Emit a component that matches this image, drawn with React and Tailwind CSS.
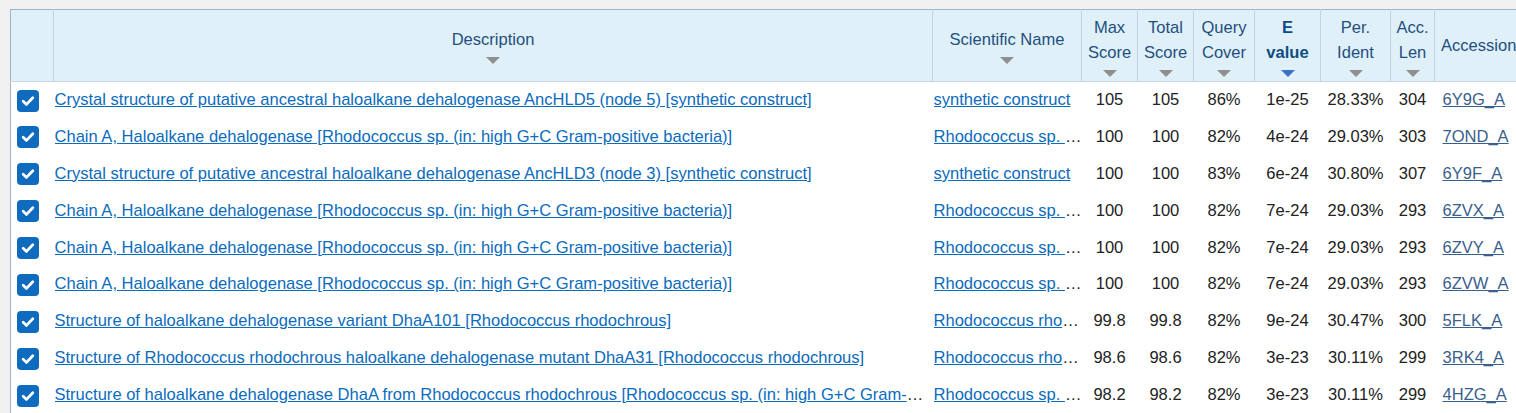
import React from "react";

const chainA = "Chain A, Haloalkane dehalogenase [Rhodococcus sp. (in: high G+C Gram-positive bacteria)]";
const rhodoSp = "Rhodococcus sp. (in: high G+C Gram-positive bacteria)";
const rhodoRh = "Rhodococcus rhodochrous";

const rows = [
  ["Crystal structure of putative ancestral haloalkane dehalogenase AncHLD5 (node 5) [synthetic construct]", "synthetic construct", "105", "105", "86%", "1e-25", "28.33%", "304", "6Y9G_A"],
  [chainA, rhodoSp, "100", "100", "82%", "4e-24", "29.03%", "303", "7OND_A"],
  ["Crystal structure of putative ancestral haloalkane dehalogenase AncHLD3 (node 3) [synthetic construct]", "synthetic construct", "100", "100", "83%", "6e-24", "30.80%", "307", "6Y9F_A"],
  [chainA, rhodoSp, "100", "100", "82%", "7e-24", "29.03%", "293", "6ZVX_A"],
  [chainA, rhodoSp, "100", "100", "82%", "7e-24", "29.03%", "293", "6ZVY_A"],
  [chainA, rhodoSp, "100", "100", "82%", "7e-24", "29.03%", "293", "6ZVW_A"],
  ["Structure of haloalkane dehalogenase variant DhaA101 [Rhodococcus rhodochrous]", rhodoRh, "99.8", "99.8", "82%", "9e-24", "30.47%", "300", "5FLK_A"],
  ["Structure of Rhodococcus rhodochrous haloalkane dehalogenase mutant DhaA31 [Rhodococcus rhodochrous]", rhodoRh, "98.6", "98.6", "82%", "3e-23", "30.11%", "299", "3RK4_A"],
  ["Structure of haloalkane dehalogenase DhaA from Rhodococcus rhodochrous [Rhodococcus sp. (in: high G+C Gram-positive bacteria)]", rhodoSp, "98.2", "98.2", "82%", "3e-23", "30.11%", "299", "4HZG_A"],
];

function Arrow({ active }) {
  return (
    <div
      className={
        "mt-[5px] mb-[2px] w-0 h-0 border-l-[7px] border-r-[7px] border-t-[7px] border-l-transparent border-r-transparent " +
        (active ? "border-t-[#3c71c8]" : "border-t-[#8f8f8f]")
      }
    />
  );
}

function Head({ lines, sort = true, active = false, bold = false }) {
  return (
    <th className="border-l border-[#c7d3dc] p-0 pt-[2px] font-normal align-middle">
      <div className={"flex flex-col items-center justify-center leading-[25px] " + (bold ? "font-bold text-[#0f4c84]" : "text-[#1f4f80]")}>
        {lines.map((l) => (
          <span key={l} className="whitespace-nowrap">{l}</span>
        ))}
        {sort && <Arrow active={active} />}
      </div>
    </th>
  );
}

function Check() {
  return (
    <div className="w-[22px] h-[22px] rounded-[4px] bg-[#0f6bbd] flex items-center justify-center">
      <svg width="14" height="14" viewBox="0 0 14 14">
        <path d="M2.2 7.3 L5.5 10.4 L11.8 3.8" fill="none" stroke="white" strokeWidth="2.8" strokeLinecap="round" strokeLinejoin="round" />
      </svg>
    </div>
  );
}

export default function App() {
  return (
    <div className="w-[1516px] h-[413px] overflow-hidden bg-[#f0f0f0] pt-[9px] pl-[10px]" style={{ fontFamily: '"Liberation Sans", Arial, sans-serif' }}>
      <table className="table-fixed border-collapse bg-white text-[16.55px] text-[#222] w-[1520px] border-t border-l border-[#9db6cc]">
        <colgroup>
          <col className="w-[43px]" />
          <col className="w-[879px]" />
          <col className="w-[149px]" />
          <col className="w-[56px]" />
          <col className="w-[56px]" />
          <col className="w-[61px]" />
          <col className="w-[66px]" />
          <col className="w-[70px]" />
          <col className="w-[44px]" />
          <col className="w-[96px]" />
        </colgroup>
        <thead>
          <tr className="h-[72px] bg-[#e0f0f8] border-b border-[#c9d8e4]">
            <th className="p-0" />
            <Head lines={["Description"]} />
            <Head lines={["Scientific Name"]} />
            <Head lines={["Max", "Score"]} />
            <Head lines={["Total", "Score"]} />
            <Head lines={["Query", "Cover"]} />
            <Head lines={["E", "value"]} active bold />
            <Head lines={["Per.", "Ident"]} />
            <Head lines={["Acc.", "Len"]} />
            <th className="border-l border-[#c7d3dc] p-0 pt-[2px] font-normal text-[#1f4f80] text-left pl-[6px] whitespace-nowrap">Accession</th>
          </tr>
        </thead>
        <tbody>
          {rows.map((r, i) => (
            <tr key={i} className="h-[36.9px]">
              <td className="p-0 pl-[6px] pt-[1px]">
                <Check />
              </td>
              <td className="p-0 pl-px pr-[6px] pt-[1px]">
                <div className="truncate">
                  <a href="#" className="text-[#0b6bbd] underline">{r[0]}</a>
                </div>
              </td>
              <td className="p-0 pl-px pt-[1px]">
                <div className="truncate">
                  <a href="#" className="text-[#0b6bbd] underline">{r[1]}</a>
                </div>
              </td>
              {r.slice(2, 8).map((v, j) => (
                <td key={j} className="p-0 pt-[1px] text-center whitespace-nowrap">{v}</td>
              ))}
              <td className="p-0 pt-[1px] pl-[8px] whitespace-nowrap">
                <a href="#" className="text-[#3a5f8c] underline">{r[8]}</a>
              </td>
            </tr>
          ))}
        </tbody>
      </table>
    </div>
  );
}
